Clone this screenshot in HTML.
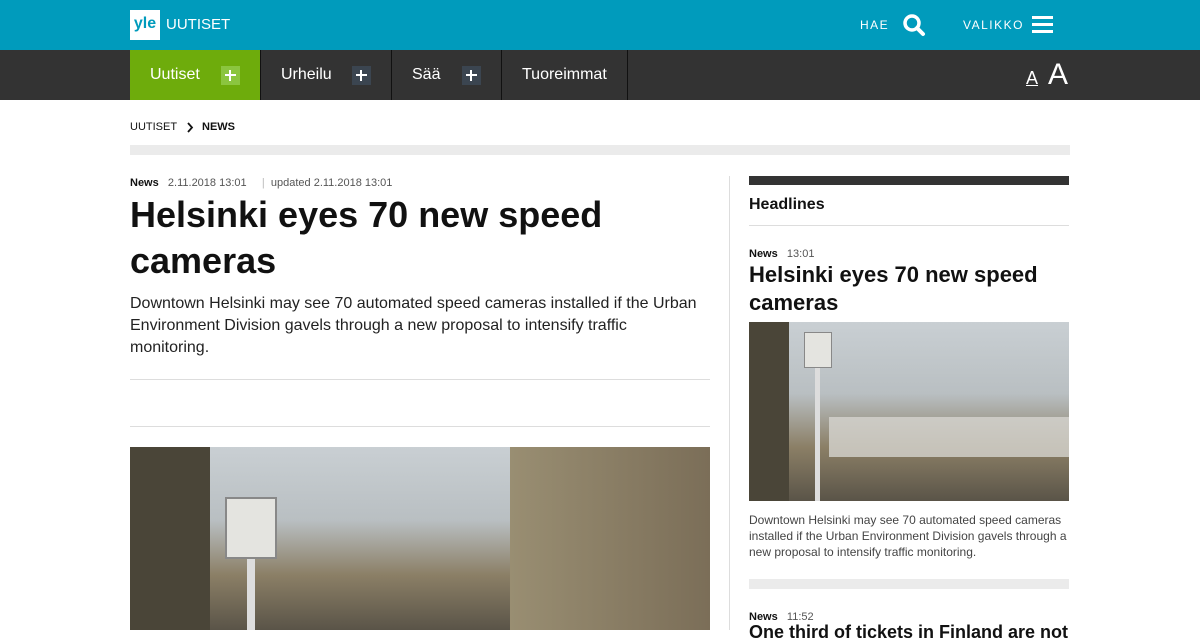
<!DOCTYPE html>
<html><head><meta charset="utf-8"><style>
*{margin:0;padding:0;box-sizing:border-box}
body{width:1200px;height:630px;overflow:hidden;background:#fff;font-family:"Liberation Sans",sans-serif;color:#111;position:relative}
.a{position:absolute}
.top{left:0;top:0;width:1200px;height:50px;background:#009bbc}
.nav{left:0;top:50px;width:1200px;height:50px;background:#333}
.tab{position:absolute;top:0;height:50px;color:#fff;font-size:16px;line-height:50px;border-right:1px solid #111}
.pl{position:absolute;top:16px;width:19px;height:19px;background:#3b4550}
.pl:before{content:"";position:absolute;left:4px;top:8px;width:11px;height:2px;background:#fff}
.pl:after{content:"";position:absolute;left:8px;top:4px;width:2px;height:11px;background:#fff}
.photo{background:linear-gradient(180deg,#c9cfd3 0%,#b9bfc2 40%,#8b7f66 70%,#5a5448 100%);overflow:hidden}
</style></head><body>
<div class="a top"></div>
<div class="a" style="left:130px;top:10px;width:30px;height:30px;background:#fff;color:#009bbc;font-weight:bold;font-size:16px;line-height:28px;text-align:center">yle</div>
<div class="a" style="left:166px;top:16px;color:#fff;font-size:15px">UUTISET</div>
<div class="a" style="left:860px;top:18px;color:#fff;font-size:12px;letter-spacing:1.5px">HAE</div>
<svg class="a" style="left:902px;top:13px" width="24" height="24" viewBox="0 0 24 24"><circle cx="10" cy="10" r="7" fill="none" stroke="#fff" stroke-width="3.5"/><path d="M15 15l6 6" stroke="#fff" stroke-width="4" stroke-linecap="round"/></svg>
<div class="a" style="left:963px;top:18px;color:#fff;font-size:12px;letter-spacing:1.5px">VALIKKO</div>
<div class="a" style="left:1032px;top:16px;width:21px;height:3px;background:#fff;box-shadow:0 7px #fff,0 14px #fff"></div>
<div class="a nav"></div>
<div class="tab" style="left:130px;top:50px;width:131px;background:#6eac0c;padding-left:20px">Uutiset<div class="pl" style="left:91px;background:#8bc53f"></div></div>
<div class="tab" style="left:261px;top:50px;width:131px;padding-left:20px">Urheilu<div class="pl" style="left:91px"></div></div>
<div class="tab" style="left:392px;top:50px;width:110px;padding-left:20px">Sää<div class="pl" style="left:70px"></div></div>
<div class="tab" style="left:502px;top:50px;width:126px;padding-left:20px">Tuoreimmat</div>
<div class="a" style="left:1026px;top:68px;color:#fff;font-size:18px;text-decoration:underline">A</div>
<div class="a" style="left:1048px;top:58px;color:#fff;font-size:30px">A</div>
<div class="a" style="left:130px;top:121px;font-size:11px">UUTISET</div>
<svg class="a" style="left:186px;top:122px" width="8" height="11" viewBox="0 0 8 11"><path d="M2 1l4 4.5L2 10" fill="none" stroke="#111" stroke-width="1.8"/></svg>
<div class="a" style="left:202px;top:121px;font-size:11px;font-weight:bold">NEWS</div>
<div class="a" style="left:130px;top:145px;width:940px;height:10px;background:#ebebeb"></div>
<div class="a" style="left:130px;top:177px;font-size:11px;color:#555"><b style="color:#111">News</b>&nbsp;&nbsp; 2.11.2018 13:01 &nbsp;&nbsp;&nbsp;&nbsp;<span style="color:#bbb">|</span>&nbsp; updated 2.11.2018 13:01</div>
<div class="a" style="left:130px;top:192px;width:560px;font-size:36px;font-weight:bold;line-height:46px">Helsinki eyes 70 new speed cameras</div>
<div class="a" style="left:130px;top:293px;width:580px;font-size:16px;line-height:22px;color:#222">Downtown Helsinki may see 70 automated speed cameras installed if the Urban Environment Division gavels through a new proposal to intensify traffic monitoring.</div>
<div class="a" style="left:130px;top:379px;width:580px;height:1px;background:#ddd"></div>
<div class="a" style="left:130px;top:426px;width:580px;height:1px;background:#ddd"></div>
<div class="a photo" style="left:130px;top:447px;width:580px;height:183px">
<div class="a" style="left:95px;top:50px;width:52px;height:62px;background:#e4e4e0;border:2px solid #888"></div>
<div class="a" style="left:117px;top:112px;width:8px;height:80px;background:#ddd"></div>
<div class="a" style="left:0;top:0;width:80px;height:183px;background:#4a4538"></div>
<div class="a" style="left:380px;top:0;width:200px;height:183px;background:linear-gradient(90deg,#998e72,#7b6e58)"></div>
</div>
<div class="a" style="left:729px;top:176px;width:1px;height:454px;background:#ddd"></div>
<div class="a" style="left:749px;top:176px;width:320px;height:9px;background:#333"></div>
<div class="a" style="left:749px;top:196px;font-size:16px;font-weight:bold">Headlines</div>
<div class="a" style="left:749px;top:225px;width:320px;height:1px;background:#ddd"></div>
<div class="a" style="left:749px;top:248px;font-size:11px;color:#555"><b style="color:#111">News</b>&nbsp;&nbsp; 13:01</div>
<div class="a" style="left:749px;top:261px;width:320px;font-size:22px;font-weight:bold;line-height:28px">Helsinki eyes 70 new speed cameras</div>
<div class="a photo" style="left:749px;top:322px;width:320px;height:179px">
<div class="a" style="left:55px;top:10px;width:28px;height:36px;background:#e4e4e0;border:1px solid #888"></div>
<div class="a" style="left:66px;top:46px;width:5px;height:133px;background:#ddd"></div>
<div class="a" style="left:0;top:0;width:40px;height:179px;background:#4a4538"></div>
<div class="a" style="left:80px;top:95px;width:240px;height:40px;background:#d6d4d0;opacity:.8"></div>
</div>
<div class="a" style="left:749px;top:512px;width:320px;font-size:12px;line-height:16px;color:#444">Downtown Helsinki may see 70 automated speed cameras installed if the Urban Environment Division gavels through a new proposal to intensify traffic monitoring.</div>
<div class="a" style="left:749px;top:579px;width:320px;height:10px;background:#ebebeb"></div>
<div class="a" style="left:749px;top:611px;font-size:11px;color:#555"><b style="color:#111">News</b>&nbsp;&nbsp; 11:52</div>
<div class="a" style="left:749px;top:622px;width:320px;font-size:18px;font-weight:bold;white-space:nowrap;overflow:hidden">One third of tickets in Finland are not least</div>
</body></html>
